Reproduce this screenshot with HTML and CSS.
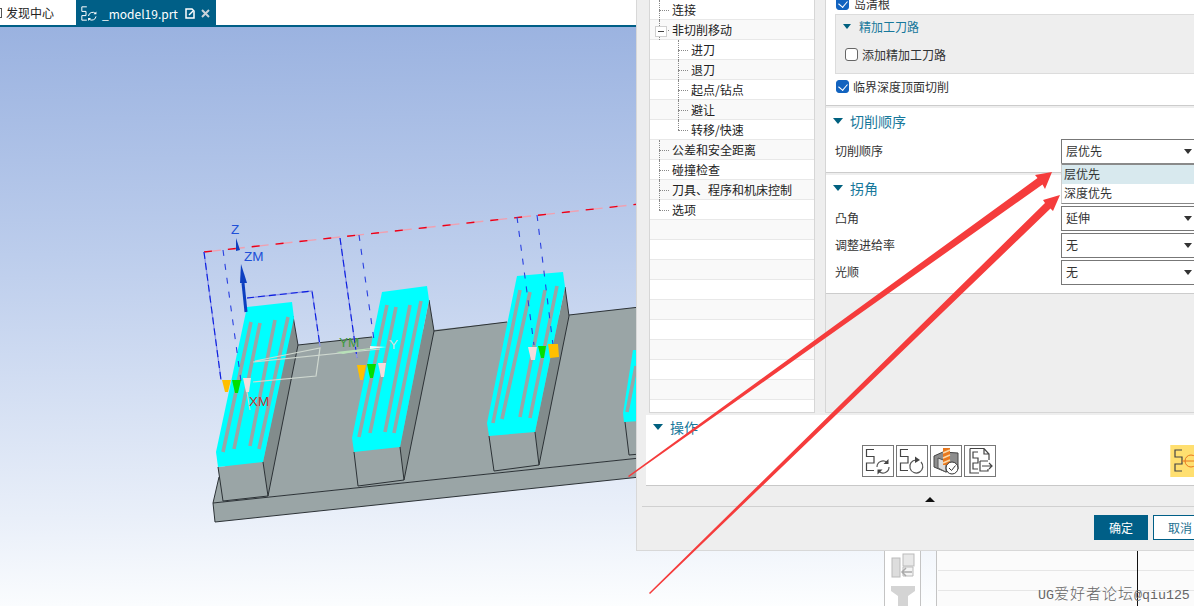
FILE: index.html
```html
<!DOCTYPE html>
<html lang="zh">
<head>
<meta charset="utf-8">
<title>_model19.prt</title>
<link rel="stylesheet" href="styles.css">
</head>
<body>
<div class="app">
  <header class="tabbar">
    <div class="tab-home"><span class="home-icon"></span>发现中心</div>
    <div class="tab-active">
      <svg class="tab-op" viewBox="0 0 24 20"><path d="M7 2H1V7.500H6V12.500H1V18H7" fill="none" stroke="#fff" stroke-width="1.200"/><path d="M9 13a5 5 0 0 1 8.500-3M18 13.500a5 5 0 0 1-8.500 3" fill="none" stroke="#fff" stroke-width="1.200"/><path d="M18.500 7.500v3.500h-3.500zM8.500 19v-3.500h3.500z" fill="#fff"/></svg>
      <span class="tab-name">_model19.prt</span>
      <svg class="tab-doc" viewBox="0 0 10 11"><path d="M1 1h6l2 2v7H1z" fill="none" stroke="#fff" stroke-width="1.500"/><path d="M4 7l4-4" stroke="#fff" stroke-width="1.500"/></svg>
      <svg class="tab-x" viewBox="0 0 9 9"><path d="M1 1l7 7M8 1l-7 7" stroke="#c9d3da" stroke-width="2"/></svg>
    </div>
  </header>

  <main class="viewport">
    <svg class="scene" viewBox="0 27 640 579" width="640" height="579">
      <!-- base plate -->
      <polygon class="face" points="213,503 219,477 298,345 640,307 640,458"/>
      <polygon class="face" points="213,503 215,522 640,477 640,458"/>
      <path class="edge" d="M298,345 L372,337M434,331 L507,322M569,315 L640,307M219,477 L213,503 L215,522 L640,477M213,503 L640,458"/>

      <!-- block 1 -->
      <polygon class="side" points="293,316 263,462 268,496 298,345"/>
      <polygon class="face" points="218,467 263,462 268,496 223,501"/>
      <path class="edge" d="M218,467 L223,501 L268,496 L263,462M268,496 L298,345 L293,316"/>
      <polygon class="top" points="247,307 292,302 294,318 263,462 218,467 216,452"/>
      <path class="slot" d="M251,322 L223,452M260,323 L234,449M275,320 L250,446M288,317 L259,449"/>

      <!-- block 2 -->
      <polygon class="side" points="429,300 400,447 404,480 434,331"/>
      <polygon class="face" points="354,452 400,447 404,480 358,486"/>
      <path class="edge" d="M354,452 L358,486 L404,480 L400,447M404,480 L434,331 L429,300"/>
      <polygon class="top" points="382,292 427,286 429,300 400,447 354,452 352,438"/>
      <path class="slot" d="M387,305 L359,437M396,307 L370,433M410,305 L385,432M421,301 L394,433"/>

      <!-- block 3 -->
      <polygon class="side" points="565,287 535,432 539,465 569,316"/>
      <polygon class="face" points="489,436 535,432 539,465 494,471"/>
      <path class="edge" d="M489,436 L494,471 L539,465 L535,432M539,465 L569,316 L565,287"/>
      <polygon class="top" points="517,276 563,272 565,287 535,432 489,436 487,423"/>
      <path class="slot" d="M520,290 L493,423M530,292 L502,419M545,290 L520,417M557,286 L530,418"/>

      <!-- block 4 -->
      <polygon class="face" points="625,422 640,421 640,454 629,455"/>
      <path class="edge" d="M625,422 L629,455 L640,454"/>
      <polygon class="top" points="633,350 640,350 640,421 624,422 623,413"/>
      <path class="slot" d="M636,366 L627,412"/>

      <!-- tool axis and clearance plane -->
      <path class="plane-under" d="M204,252 L640,204"/>
      <path class="plane" d="M204,252 L640,204"/>
      <path class="guide-under" d="M204,252 L221,380M340,238 L357,358"/>
      <path class="guide" d="M204,252 L221,380M340,238 L357,358"/>
      <path class="guide-dash" d="M223,250 L241,381M359,235 L374,340M517,217 L534,345M537,215 L553,345"/>
      <path class="guide-under" d="M247,298 L312,291 L320,346"/>
      <path class="guide" d="M247,298 L312,291 L320,346"/>

      <!-- wcs -->
      <path class="wcs-light" d="M253,382 L316,376 L320,348 L255,361M253,362 L380,349M245,380 L250,410"/>
      <polygon class="wcs-y" points="336,352 380,347 343,354"/>
      <polygon class="wcs-y2" points="370,349 386,347 370,346"/>
      <path class="wcs-zline" d="M243,283 L246,312"/>
      <polygon class="wcs-z" points="240,283 241,264 247,283"/>
      <polygon class="wcs-z" points="236,238 240,250 236,251"/>
      <text class="lbl lbl-z" x="231" y="234">Z</text>
      <text class="lbl lbl-z" x="244" y="261">ZM</text>
      <text class="lbl lbl-x" x="249" y="406">XM</text>
      <text class="lbl lbl-ym" x="339" y="347">YM</text>
      <text class="lbl lbl-y" x="389" y="349">Y</text>

      <!-- tool markers -->
      <polygon class="m-o" points="222,380 231,380 228,392 225,392"/>
      <polygon class="m-g" points="232,380 241,380 238,393 235,393"/>
      <polygon class="m-p" points="243,378 251,378 249,392 246,392"/>
      <polygon class="m-o" points="357,365 366,365 363,380 360,380"/>
      <polygon class="m-g" points="367,364 376,364 373,378 370,378"/>
      <polygon class="m-p" points="378,363 386,363 384,377 381,377"/>
      <polygon class="m-p" points="528,347 537,347 535,360 531,360"/>
      <polygon class="m-g" points="538,346 546,346 544,358 541,358"/>
      <polygon class="m-o" points="548,344 558,344 559,357 550,358"/>
    </svg>
  </main>

  <section class="backpanel">
    <div class="back-icons">
      <svg class="back-ico" viewBox="0 0 24 25"><rect x="1" y="5" width="8" height="19" fill="#ddd" stroke="#bbb"/><rect x="12" y="1" width="11" height="12" fill="#e8e8e8" stroke="#bbb"/><path d="M12 14h10v9H12z" fill="#f4f4f4" stroke="#bbb"/><path d="M21 19h-10M15 15l-4 4 4 4" fill="none" stroke="#aaa" stroke-width="1.500"/></svg>
      <svg class="back-ico" viewBox="0 0 24 21"><path d="M0 0h24v5l-7 5v11H7V10L0 5z" fill="#d4d4d4"/></svg>
    </div>
    <div class="back-table">
      <div class="back-row"></div>
      <div class="back-row"></div>
      <span class="back-cursor"></span>
    </div>
  </section>

  <section class="dialog">
    <div class="dlg-body">
      <nav class="tree">
        <div class="row"><span class="n1">连接</span></div>
        <div class="row"><span class="n1 open">非切削移动</span></div>
        <div class="row"><span class="n2">进刀</span></div>
        <div class="row"><span class="n2">退刀</span></div>
        <div class="row"><span class="n2">起点/钻点</span></div>
        <div class="row"><span class="n2">避让</span></div>
        <div class="row"><span class="n2 last">转移/快速</span></div>
        <div class="row"><span class="n1">公差和安全距离</span></div>
        <div class="row"><span class="n1">碰撞检查</span></div>
        <div class="row"><span class="n1">刀具、程序和机床控制</span></div>
        <div class="row"><span class="n1 last">选项</span></div>
        <div class="row"></div><div class="row"></div><div class="row"></div>
        <div class="row"></div><div class="row"></div><div class="row"></div>
        <div class="row"></div><div class="row"></div><div class="row"></div>
      </nav>
      <div class="props">
        <div class="group group-top">
          <label class="check check-clip"><span class="box on"></span>岛清根</label>
          <div class="subgroup">
            <div class="sub-head"><span class="tri tri-s"></span>精加工刀路</div>
            <label class="check check-plain"><span class="box"></span>添加精加工刀路</label>
          </div>
          <label class="check check-last"><span class="box on"></span>临界深度顶面切削</label>
        </div>
        <div class="group group-order">
          <div class="head"><span class="tri"></span>切削顺序</div>
          <div class="field">
            <span class="field-label">切削顺序</span>
            <div class="select">层优先<span class="caret"></span></div>
          </div>
          <ul class="dropdown">
            <li class="picked">层优先</li>
            <li>深度优先</li>
          </ul>
        </div>
        <div class="group group-corner">
          <div class="head"><span class="tri"></span>拐角</div>
          <div class="field field-tight">
            <span class="field-label">凸角</span>
            <div class="select">延伸<span class="caret"></span></div>
          </div>
          <div class="field field-tight">
            <span class="field-label">调整进给率</span>
            <div class="select">无<span class="caret"></span></div>
          </div>
          <div class="field field-tight">
            <span class="field-label">光顺</span>
            <div class="select">无<span class="caret"></span></div>
          </div>
        </div>
      </div>
    </div>

    <div class="ops">
      <div class="head head-ops"><span class="tri"></span>操作</div>
      <div class="ops-tools">
        <button class="tool">
          <svg viewBox="0 0 30 30"><path class="ic" d="M11 3.500H3.500V10.500H11V17H3.500V24.500H11"/><path class="ic2" d="M14 21a6 6 0 0 1 10-4.500M26 21a6 6 0 0 1-10 4.500"/><path class="ic-fill" d="M25.500 13v5h-5zM14.500 28.500v-5h5z"/></svg>
        </button>
        <button class="tool">
          <svg viewBox="0 0 30 30"><path class="ic" d="M11 3.500H3.500V10.500H11V17H3.500V24.500H11"/><path class="ic2" d="M24 16a6.500 6.500 0 1 1-5-2"/><path class="ic-fill" d="M18 10.500l5 3.500-5 3z"/></svg>
        </button>
        <button class="tool">
          <svg viewBox="0 0 30 30"><path d="M3 10l9-4 15 1v16l-12 3-12-5z" fill="#8d8d8d" stroke="#444"/><path d="M7 12l8 3v11l-8-4z" fill="#dcdcdc" stroke="#555"/><path d="M12 2h7v17h-7z" fill="#e8781e"/><path d="M12 7l7-3M12 12l7-3M12 17l7-3" stroke="#fcd9a8" stroke-width="1.500"/><circle cx="21" cy="22" r="6" fill="#fff" stroke="#333"/><path d="M18 22l2.500 2.500 4-5" fill="none" stroke="#333"/></svg>
        </button>
        <button class="tool">
          <svg viewBox="0 0 30 30"><path class="ic" d="M5 2.500H19L24 8V14M5 2.500V27H14M19 2.500V8H24"/><path class="ic" d="M13 6H8V12H13V17H8V23H13"/><path class="ic" d="M15 15H23M15 15V25H23V23M17 20H27M24 17l3 3-3 3"/></svg>
        </button>
        <div class="tool-active">
          <svg viewBox="0 0 24 32"><path class="ic" d="M11 5H4V12H11V19H4V26H11"/><path d="M11 16H24" stroke="#e8781e" fill="none"/><circle cx="20" cy="16" r="6" fill="none" stroke="#e8781e"/></svg>
        </div>
      </div>
    </div>

    <div class="collapse"><span class="tri-up"></span></div>

    <footer class="actions">
      <button class="btn btn-primary">确定</button>
      <button class="btn btn-ghost">取消</button>
    </footer>
  </section>

  <svg class="arrows" viewBox="0 0 1194 606" width="1194" height="606">
    <polygon class="arrow" points="628,476 1037.500,178 1035,175 1052,172 1045,189 1042.500,184.500 629,477"/>
    <polygon class="arrow" points="649,593 1045,203 1043,200 1060,195 1053,211 1050.500,208.500 650,594"/>
  </svg>

  <div class="watermark">UG<span class="wm-cjk">爱好者论坛</span>@qiu125</div>
</div>
</body>
</html>
```

FILE: styles.css
```css
* { box-sizing: border-box; }
html, body { margin: 0; padding: 0; }
body {
  width: 1194px;
  height: 606px;
  overflow: hidden;
  font-family: "Noto Sans CJK SC", "Noto Sans", sans-serif;
  font-size: 12px;
  color: #333;
  background: #fff;
}
.app {
  position: relative;
  width: 1194px;
  height: 606px;
  overflow: hidden;
  display: flex;
  flex-direction: column;
}

/* tabs */
.tabbar {
  flex: none;
  height: 27px;
  display: flex;
  background: #fff;
  border-bottom: 2px solid #005f87;
}
.tab-home {
  width: 76px;
  display: flex;
  align-items: center;
  gap: 4px;
  color: #222;
  line-height: 25px;
}
.home-icon {
  width: 2px;
  height: 10px;
  border: 1px solid #555;
  border-left: 0;
}
.tab-active {
  width: 140px;
  height: 27px;
  background: #005f87;
  color: #fff;
  display: flex;
  align-items: center;
  padding-left: 5px;
}
.tab-op { width: 20px; height: 17px; flex: none; }
.tab-name { font-size: 12px; margin-left: 1px; width: 83px; flex: none; }
.tab-doc { width: 10px; height: 11px; flex: none; }
.tab-x { width: 9px; height: 9px; flex: none; margin-left: 6px; }

/* graphics viewport */
.viewport {
  flex: 1;
  background: linear-gradient(179deg, #9ab2e0 0%, #bccdec 38%, #e9eff9 82%, #feffff 100%);
}
.scene { display: block; }
.face { fill: #9aa5a6; }
.side { fill: #828c8c; }
.top { fill: #00ffff; }
.edge { fill: none; stroke: #2c3236; stroke-width: 1; }
.slot { fill: none; stroke: #9aa5a6; stroke-width: 3.600; }
.plane-under { fill: none; stroke: #f0a0b0; stroke-width: 1.300; stroke-dasharray: 17 7; }
.plane { fill: none; stroke: #e8001a; stroke-width: 1.300; stroke-dasharray: 8 16; }
.guide-under { fill: none; stroke: #8f97e8; stroke-width: 1.300; }
.guide { fill: none; stroke: #0a1ee0; stroke-width: 1.100; stroke-dasharray: 7 4; }
.guide-dash { fill: none; stroke: #2a40e0; stroke-width: 1.100; stroke-dasharray: 6 8; }
.wcs-light { fill: none; stroke: #cfd8d0; stroke-width: 1.200; }
.wcs-y { fill: #b8e0b8; }
.wcs-y2 { fill: #f4f4f4; }
.wcs-zline { stroke: #0d3fc0; stroke-width: 3; fill: none; }
.wcs-z { fill: #0d3fc0; }
.lbl { font-family: "Liberation Sans", sans-serif; font-size: 13.500px; }
.lbl-z { fill: #2050d8; }
.lbl-x { fill: #c83030; }
.lbl-ym { fill: #3f9a3f; }
.lbl-y { fill: #d8dcd8; }
.m-o { fill: #ffbf00; }
.m-g { fill: #00e000; }
.m-p { fill: #f6dcdc; }

/* app window behind the dialog */
.backpanel {
  position: absolute;
  left: 884px;
  top: 551px;
  width: 310px;
  height: 55px;
  display: flex;
}
.back-icons {
  width: 37px;
  padding: 2px 6px 0;
  display: flex;
  flex-direction: column;
  gap: 8px;
  border-left: 1px solid #c4c4c4;
  border-right: 1px solid #c4c4c4;
  background: #fff;
  overflow: hidden;
}
.back-ico { display: block; width: 24px; flex: none; }
.back-icons .back-ico:first-child { height: 25px; }
.back-icons .back-ico:last-child { height: 21px; }
.back-table {
  position: relative;
  margin-left: 15px;
  flex: 1;
  border-left: 1px solid #c4c4c4;
  background: #fbfbfb;
  padding-left: 1px;
}
.back-row { height: 20px; border-bottom: 1px solid #e6e6e6; }
.back-cursor {
  position: absolute;
  left: 200px;
  top: 0;
  width: 1px;
  height: 55px;
  background: #111;
}

/* dialog */
.dialog {
  position: absolute;
  left: 636px;
  top: 0;
  width: 580px;
  height: 551px;
  background: #eeeeee;
  border-left: 1px solid #d8d8d8;
  border-bottom: 1px solid #d8d8d8;
  display: flex;
  flex-direction: column;
}
.dlg-body {
  flex: none;
  height: 413px;
  display: flex;
  padding-left: 12px;
}
.tree {
  flex: none;
  width: 166px;
  height: 413px;
  background: #fff;
  border: 1px solid #d6d6d6;
  border-top: 0;
}
.row {
  position: relative;
  height: 20px;
  line-height: 19px;
  border-bottom: 1px solid #e8e8e8;
  color: #222;
}
.row:nth-child(even) { background: #f9f9f9; }
.n1, .n2 { position: absolute; top: 0; height: 20px; }
.n1 { left: 22px; }
.n2 { left: 41px; }
.n1::before, .n2::before {
  content: "";
  position: absolute;
  left: -13px;
  top: 10px;
  width: 10px;
  border-top: 1px dotted #888;
}
.n1::after, .n2::after {
  content: "";
  position: absolute;
  left: -13px;
  top: 0;
  height: 20px;
  border-left: 1px dotted #888;
}
.n1.last::after, .n2.last::after { height: 10px; }
.n1.open::before { left: -8px; width: 5px; }
.row:nth-child(2)::before {
  content: "";
  position: absolute;
  left: 5px;
  top: 6px;
  width: 10px;
  height: 9px;
  background: linear-gradient(#444, #444) center / 6px 1px no-repeat #fff;
  border: 1px solid #d0d0d0;
  z-index: 1;
}

.props {
  flex: none;
  width: 400px;
  margin-left: 10px;
  height: 413px;
  background: #eee;
  border-left: 1px solid #d6d6d6;
  border-bottom: 1px solid #d6d6d6;
  display: flex;
  flex-direction: column;
  gap: 2px;
}
.group {
  flex: none;
  background: #fff;
  border-bottom: 1px solid #ccc;
  position: relative;
}
.group-top { height: 106px; padding: 0 0 0 9px; overflow: hidden; }
.group-order { height: 65px; }
.group-corner { height: 119px; }
.check { display: flex; align-items: center; color: #333; }
.check-clip { margin-top: -6px; height: 18px; margin-bottom: 2px; gap: 5px; margin-left: 1px; }
.check-plain { margin: 9px 0 0 9px; gap: 4px; height: 16px; }
.check-last { margin: 6px 0 0 1px; gap: 4px; height: 12px; }
.box {
  width: 13px;
  height: 13px;
  flex: none;
  border: 1px solid #666;
  border-radius: 3px;
  background: #fff;
  position: relative;
}
.box.on { background: #1263bf; border-color: #1263bf; }
.box.on::after {
  content: "";
  position: absolute;
  left: 3px;
  top: 1.500px;
  width: 5px;
  height: 7px;
  border: solid #fff;
  border-width: 0 1.500px 1.500px 0;
  transform: rotate(40deg);
}
.subgroup {
  width: 500px;
  height: 60px;
  background: #eeeeee;
  border: 1px solid #dcdcdc;
}
.sub-head {
  display: flex;
  align-items: center;
  height: 22px;
  color: #17789b;
  padding-left: 7px;
  gap: 8px;
}
.tri {
  width: 0;
  height: 0;
  flex: none;
  border-left: 5px solid transparent;
  border-right: 5px solid transparent;
  border-top: 6px solid #00607f;
}
.tri-s { border-left-width: 4px; border-right-width: 4px; border-top-width: 5px; }
.head {
  display: flex;
  align-items: center;
  gap: 7px;
  height: 26px;
  padding-left: 7px;
  font-size: 14px;
  color: #17789b;
  margin-bottom: 5px;
}
.field {
  display: flex;
  align-items: center;
  height: 25px;
  padding-left: 9px;
}
.field-tight { height: 25px; margin-bottom: 2px; }
.field-label { width: 226px; flex: none; margin-top: -2px; }
.select {
  width: 140px;
  height: 25px;
  border: 1px solid #777;
  background: #fff;
  padding-left: 4px;
  line-height: 22px;
  position: relative;
  flex: none;
}
.caret {
  position: absolute;
  left: 122px;
  top: 9px;
  width: 0;
  height: 0;
  border-left: 4px solid transparent;
  border-right: 4px solid transparent;
  border-top: 5px solid #333;
}
.dropdown {
  position: absolute;
  left: 235px;
  top: 55px;
  width: 140px;
  margin: 0;
  padding: 0;
  list-style: none;
  background: #fff;
  border-top: 2px solid #8a8a8a;
  border-bottom: 1px solid #888;
  border-left: 1px solid #ccc;
  z-index: 3;
}
.dropdown li { height: 19px; line-height: 18px; padding-left: 2px; }
.dropdown .picked { background: #d8e9ee; }

.ops {
  flex: none;
  height: 71px;
  margin: 2px 0 0 9px;
  background: #fff;
  border-bottom: 1px solid #c8c8c8;
}
.head-ops { height: 23px; margin-bottom: 7px; }
.ops-tools {
  display: flex;
  gap: 2px;
  padding-left: 216px;
}
.tool {
  width: 32px;
  height: 32px;
  padding: 0;
  border: 1px solid #777;
  background: #fff;
  display: block;
}
.tool svg { display: block; width: 30px; height: 30px; }
.ic { fill: none; stroke: #444; stroke-width: 1.200; }
.ic2 { fill: none; stroke: #555; stroke-width: 1.200; }
.ic-fill { fill: #444; }
.tool-active {
  margin-left: 172px;
  width: 30px;
  height: 32px;
  background: #ffdf70;
  border-left: 1px solid #ffe89a;
}
.tool-active svg { display: block; width: 24px; height: 32px; }
.collapse {
  flex: none;
  height: 21px;
  margin-left: 5px;
  border-bottom: 1px solid #d0d0d0;
  display: flex;
  align-items: center;
  padding-left: 283px;
  padding-top: 6px;
}
.tri-up {
  width: 0;
  height: 0;
  border-left: 5px solid transparent;
  border-right: 5px solid transparent;
  border-bottom: 5px solid #111;
}
.actions {
  flex: none;
  display: flex;
  gap: 5px;
  padding: 8px 0 0 457px;
}
.btn {
  width: 54px;
  height: 25px;
  padding: 0;
  font: inherit;
  font-size: 12px;
  border-radius: 0;
  border: 1px solid #005f87;
}
.btn-primary { background: #005f87; color: #fff; }
.btn-ghost { background: #fff; color: #1c6f90; }

/* annotations */
.arrows {
  position: absolute;
  left: 0;
  top: 0;
  pointer-events: none;
}
.arrow { fill: #f53c3c; }
.watermark {
  position: absolute;
  left: 1038px;
  top: 584px;
  font-family: "Liberation Mono", "Noto Sans CJK SC", monospace;
  font-size: 13.300px;
  line-height: 18px;
  color: #666;
  white-space: nowrap;
}
.wm-cjk {
  font-family: "Noto Sans CJK SC", sans-serif;
  font-size: 15px;
  letter-spacing: 1px;
  font-weight: 300;
}
```
